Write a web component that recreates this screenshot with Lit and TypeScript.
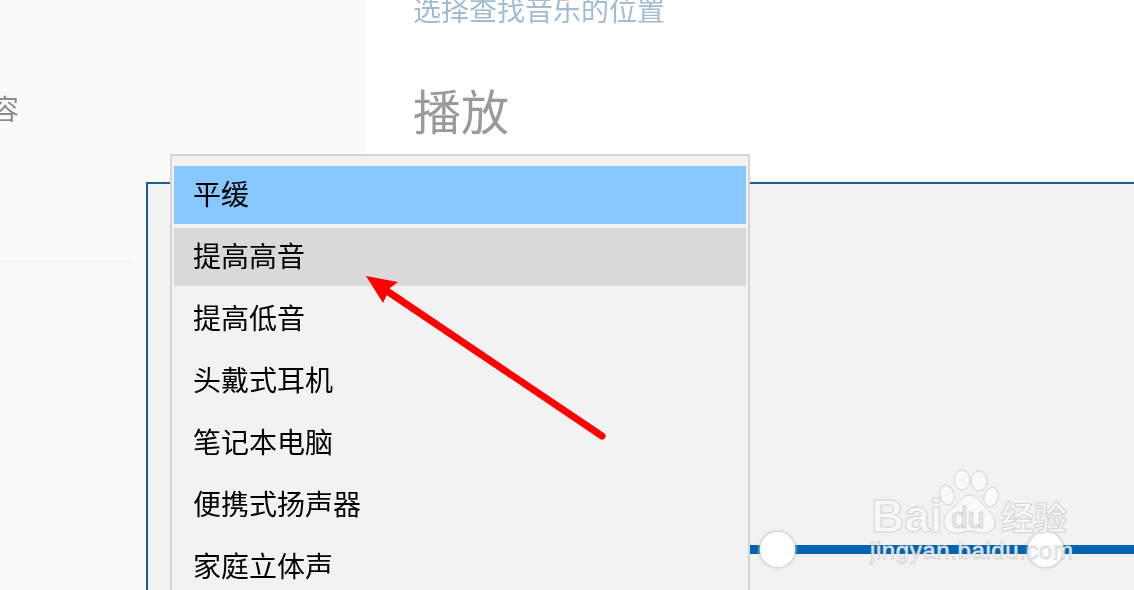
import { LitElement, html, css, svg } from "lit";
import { customElement } from "lit/decorators.js";

const ITEMS = ["平缓", "提高高音", "提高低音", "头戴式耳机", "笔记本电脑", "便携式扬声器", "家庭立体声"];

@customElement("app-root")
export class AppRoot extends LitElement {
  static styles = css`
    :host {
      display: block;
      position: relative;
      width: 1134px;
      height: 590px;
      overflow: hidden;
      background: #fff;
      font-family: "Noto Sans CJK SC", "Liberation Sans", sans-serif;
    }
    .page { display: flex; height: 590px; }
    .side {
      flex: 0 0 366px;
      background: #fafafa;
      box-sizing: border-box;
      padding-top: 90px;
    }
    .side-label {
      margin-left: -9px;
      font-size: 28px;
      line-height: 36px;
      color: #8c8c8c;
      filter: blur(0.35px);
    }
    .side-rule {
      margin-top: 135px;
      width: 134px;
      height: 1px;
      background: #efefef;
    }
    .main { flex: 1; padding: 0 0 0 47px; }
    .link {
      margin-top: -10px;
      font-size: 28px;
      line-height: 38px;
      color: #a3bcd4;
      white-space: nowrap;
      filter: blur(0.35px);
    }
    .h {
      margin-top: 49px;
      font-size: 48px;
      line-height: 64px;
      color: #9a9a9a;
      white-space: nowrap;
      filter: blur(0.4px);
    }
    .dialog {
      position: absolute;
      left: 146px;
      top: 182px;
      right: -4px;
      bottom: -4px;
      box-sizing: border-box;
      border: 2px solid #1f5c8f;
      background: #f2f2f2;
      padding: 361px 0 0 602px;
    }
    .track {
      position: relative;
      height: 9px;
      background: #0063b1;
    }
    .thumb {
      position: absolute;
      top: -13px;
      width: 35px;
      height: 35px;
      border-radius: 50%;
      background: #fff;
      box-shadow: 0 0 3px 1px #c4c4c4;
    }
    .t1 { left: 10px; }
    .t2 { left: 278px; }
    .menu {
      position: absolute;
      left: 170px;
      top: 154px;
      width: 580px;
      height: 460px;
      box-sizing: border-box;
      border: 2px solid #d6d6d6;
      background: #f2f2f2;
      padding: 10px 2px 0;
      display: flex;
      flex-direction: column;
      gap: 4px;
    }
    .item {
      flex: 0 0 58px;
      display: flex;
      align-items: center;
      padding-left: 19px;
      font-size: 28px;
      color: #000;
      white-space: nowrap;
    }
    .item span {
      position: relative;
      top: -2px;
      filter: blur(0.3px);
    }
    .sel { background: #86c8ff; }
    .hov { background: #d9d9d9; }
    .overlay {
      position: absolute;
      left: 0;
      top: 0;
      width: 1134px;
      height: 590px;
      pointer-events: none;
    }
    .wm-big { font: 700 46px "Liberation Sans", sans-serif; }
    .wm-du { font: 400 30px "Liberation Sans", sans-serif; }
    .wm-cn { font: 700 33px "Noto Sans CJK SC", sans-serif; }
    .wm-url { font: 400 24px "Liberation Sans", sans-serif; letter-spacing: 0.6px; }
  `;

  private overlay() {
    return svg`<svg class="overlay" viewBox="0 0 1134 590">
      <g fill="#f9f9f9" fill-opacity="0.9" stroke="#d4d4d4" stroke-width="1">
        <ellipse cx="962" cy="480" rx="8" ry="10"/>
        <ellipse cx="979" cy="481" rx="8" ry="10"/>
        <ellipse cx="947" cy="495" rx="7" ry="10" transform="rotate(-15 947 495)"/>
        <ellipse cx="991" cy="497" rx="7" ry="10" transform="rotate(15 991 497)"/>
        <path d="M970 495c-8 0-10 8-16 12-7 5-11 10-10 17 1 6 6 9 13 9 5 0 9-2 13-2s8 2 14 2c7 0 11-4 11-10 0-6-4-11-10-16-6-5-7-12-15-12z"/>
        <text class="wm-big" x="871" y="532">Bai</text>
        <text class="wm-cn" x="1001" y="530">经验</text>
      </g>
      <text class="wm-du" x="951" y="528" fill="#f2f2f2" stroke="#cfcfcf" stroke-width="1">du</text>
      <text class="wm-url" x="870" y="559" fill="#fafafa" fill-opacity="0.9" stroke="#d2d2d2" stroke-width="0.8">jingyan.baidu.com</text>
      <line x1="602" y1="436" x2="384" y2="289" stroke="#ff0000" stroke-width="7" stroke-linecap="round"/>
      <path d="M366 276L398 282L390 288L383 303Z" fill="#ff0000"/>
    </svg>`;
  }

  render() {
    return html`
      <div class="page">
        <aside class="side">
          <div class="side-label">容</div>
          <div class="side-rule"></div>
        </aside>
        <main class="main">
          <div class="link">选择查找音乐的位置</div>
          <div class="h">播放</div>
        </main>
      </div>
      <section class="dialog">
        <div class="track">
          <div class="thumb t1"></div>
          <div class="thumb t2"></div>
        </div>
      </section>
      <div class="menu">
        ${ITEMS.map((t, i) => html`<div class="item ${i === 0 ? "sel" : i === 1 ? "hov" : ""}"><span>${t}</span></div>`)}
      </div>
      ${this.overlay()}
    `;
  }
}
